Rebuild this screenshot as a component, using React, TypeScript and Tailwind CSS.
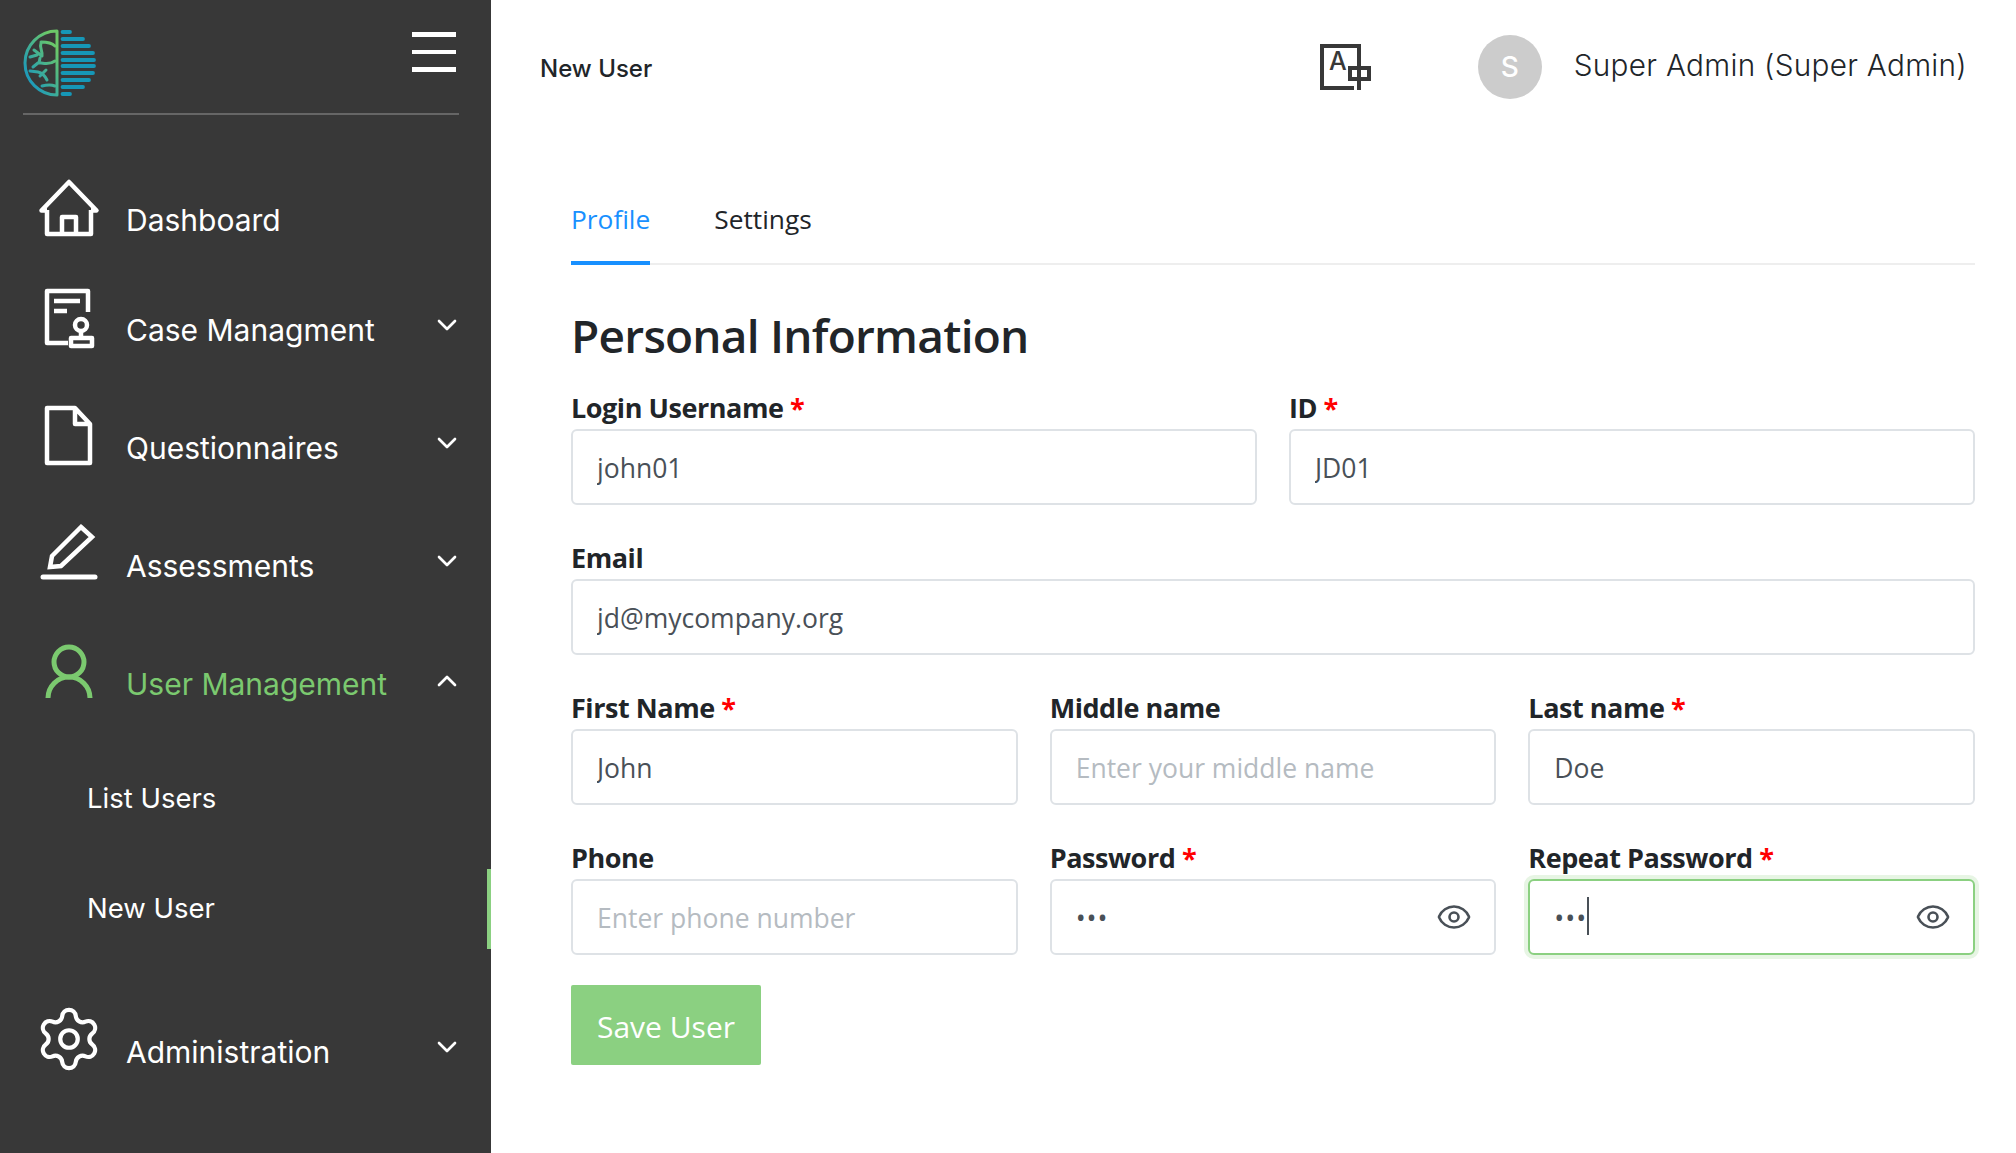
import React from 'react';
import { ChevronDown, ChevronUp, Eye, Settings } from 'lucide-react';

const sideFont = "font-['Inter',sans-serif]";

function Logo() {
  const bars: [number, number][] = [
    [32, 70], [39, 83], [46, 89], [53, 93], [60, 94], [66, 94], [73, 93], [80, 89], [87, 83], [94, 70],
  ];
  return (
    <svg width="74" height="68" viewBox="23 29 74 68" fill="none">
      <defs>
        <linearGradient id="brain" x1="24" y1="70" x2="58" y2="50" gradientUnits="userSpaceOnUse">
          <stop offset="0" stopColor="#1f9bb8" />
          <stop offset="1" stopColor="#6cc868" />
        </linearGradient>
      </defs>
      <g stroke="url(#brain)" strokeWidth="3" strokeLinecap="round">
        <path d="M57 31V95M57 31A32 32 0 0 0 57 95" />
        <path d="M41 42C47 42 52 43 55 46M41 43C39 48 43 51 42 56M34 50L42 56M30 57L37 55M55 61C48 66 42 62 38 63L33 67M40 58L39 63" />
        <path d="M30 71L38 72C43 73 46 78 47 80M46 70L40 76M42 86C46 85 50 84 55 86" />
      </g>
      {bars.map(([y, x]) => (
        <line key={y} x1="62.5" y1={y} x2={x} y2={y} stroke="#1697b7" strokeWidth="3.8" strokeLinecap="round" />
      ))}
    </svg>
  );
}

function HomeIcon() {
  return (
    <svg width="64" height="64" viewBox="0 0 64 64" fill="none" stroke="currentColor" strokeWidth="4.5" strokeLinejoin="round">
      <path d="M10 35.5H4.5L32 7l27.5 28.5H54" />
      <path d="M10 35V59H54V35M25 59V42H39V59" />
    </svg>
  );
}

function CaseIcon() {
  return (
    <svg width="64" height="64" viewBox="0 0 64 64" fill="none" stroke="currentColor" strokeWidth="4.5" strokeLinejoin="round">
      <path d="M51 27V6H10V58H31M17 16H43M17 26H30" />
      <circle cx="44" cy="40" r="6" />
      <path d="M44 46V53M34 53H55V61H34Z" />
    </svg>
  );
}

function DocIcon() {
  return (
    <svg width="64" height="64" viewBox="0 0 64 64" fill="none" stroke="currentColor" strokeWidth="4.5" strokeLinejoin="round">
      <path d="M10 5H38L53 21V60H10ZM38 5V21H53" />
    </svg>
  );
}

function PenIcon() {
  return (
    <svg width="64" height="64" viewBox="0 0 64 64" fill="none" stroke="currentColor" strokeWidth="4.5" strokeLinejoin="miter">
      <path d="M44 6L55 16L24 45L13 46L15 35Z" />
      <path d="M6 56H58" strokeLinecap="round" strokeWidth="5" />
    </svg>
  );
}

function UserIcon() {
  return (
    <svg width="64" height="64" viewBox="0 0 64 64" fill="none" stroke="currentColor" strokeWidth="5">
      <circle cx="32" cy="23" r="15" />
      <path d="M11 59A21 21 0 0 1 53 59" />
    </svg>
  );
}

function NavRow({ icon, label, open, active, tall }: { icon: React.ReactNode; label: string; open?: boolean; active?: boolean; tall?: boolean }) {
  return (
    <div className={`flex items-center pl-[37px] pr-[28px] ${tall ? 'h-[118px]' : 'h-[110px]'} ${active ? 'text-[#7bc96f]' : 'text-white'}`}>
      <div className="w-[64px] h-[64px] mb-[26px] shrink-0 flex items-center justify-center">{icon}</div>
      <span className="ml-[25px] flex-1 text-[30px] leading-none">{label}</span>
      {open === true && <ChevronUp size={32} className="text-white mb-[6px]" />}
      {open === false && <ChevronDown size={32} className="text-white mb-[10px]" />}
    </div>
  );
}

function Sidebar() {
  return (
    <aside className={`w-[491px] shrink-0 h-[1153px] bg-[#383838] ${sideFont}`}>
      <div className="ml-[23px] mr-[32px] h-[115px] border-b-2 border-[#666666] flex items-start justify-between pt-[29px] pr-[3px]">
        <Logo />
        <div className="mt-[3px] flex flex-col gap-[13px]">
          <span className="block w-[44px] h-[5px] bg-white" />
          <span className="block w-[44px] h-[4px] bg-white" />
          <span className="block w-[44px] h-[5px] bg-white" />
        </div>
      </div>
      <nav className="pt-[50px]">
        <NavRow icon={<HomeIcon />} label="Dashboard" />
        <NavRow icon={<CaseIcon />} label="Case Managment" open={false} />
        <div className="mt-[4px]">
          <NavRow tall icon={<DocIcon />} label="Questionnaires" open={false} />
          <NavRow tall icon={<PenIcon />} label="Assessments" open={false} />
          <NavRow tall active icon={<UserIcon />} label="User Management" open />
        </div>
        <div className="h-[110px] flex items-center pl-[87px] pt-[2px] text-white text-[27.5px] leading-none">List Users</div>
        <div className="relative h-[110px] flex items-center pl-[87px] pt-[2px] text-white text-[27.5px] leading-none">
          New User
          <span className="absolute right-0 top-[16px] w-[4px] h-[80px] bg-[#8bd081]" />
        </div>
        <div className="mt-[34px]">
          <NavRow icon={<Settings size={70} strokeWidth={1.45} className="shrink-0" />} label="Administration" open={false} />
        </div>
      </nav>
    </aside>
  );
}

function TranslateIcon() {
  return (
    <svg width="51" height="46" viewBox="0 0 51 46" fill="none" stroke="#383838" strokeWidth="4">
      <path d="M39 17V2H2V44H34" />
      <text x="9" y="26" fontSize="25" fontWeight="500" fill="#383838" stroke="none" fontFamily="Inter, sans-serif">A</text>
      <path d="M30 24H49V35H30ZM39 17V46" />
    </svg>
  );
}

function Label({ text, required }: { text: string; required?: boolean }) {
  return (
    <label className="block h-[36px] mb-[3px] text-[27px] leading-[36px] font-bold tracking-[-0.45px] text-[#212529]">
      {text}
      {required && <span className="text-[#ff0000]"> *</span>}
    </label>
  );
}

function Field({ label, required, value, placeholder, password, focused }: { label: string; required?: boolean; value?: string; placeholder?: string; password?: boolean; focused?: boolean }) {
  return (
    <div>
      <Label text={label} required={required} />
      <div className="relative">
        <input
          readOnly
          type={password ? 'password' : 'text'}
          defaultValue={value}
          placeholder={placeholder}
          className={`block w-full h-[76px] px-[24px] pt-[1px] rounded-[6px] border-2 bg-white text-[26.5px] text-[#495057] placeholder:text-[#b5bbc1] outline-none ${password ? 'tracking-[1px]' : ''} ${focused ? 'border-[#8bd081] shadow-[0_0_0_4px_#e7f5e4]' : 'border-[#dee2e6]'}`}
        />
        {password && <Eye size={36} strokeWidth={1.75} className="absolute right-[24px] top-[20px] text-[#495057]" />}
        {focused && <span className="absolute left-[59px] top-[18px] w-[2px] h-[38px] bg-[#495057]" />}
      </div>
    </div>
  );
}

export default function App() {
  return (
    <div className="flex w-[2016px] h-[1153px] overflow-hidden bg-white font-['Open_Sans',sans-serif]">
      <Sidebar />
      <main className="flex-1 min-w-0">
        <header className={`h-[134px] pl-[49px] pr-[49px] flex items-center text-[#212529] ${sideFont}`}>
          <span className="flex-1 text-[24px] font-medium mt-[3px]">New User</span>
          <TranslateIcon />
          <div className="ml-[107px] w-[64px] h-[64px] rounded-full bg-[#cccccc] text-white text-[28px] font-medium flex items-center justify-center">S</div>
          <span className="ml-[32px] text-[29.7px] font-light tracking-[0.3px] whitespace-nowrap -mt-[3px]">Super Admin (Super Admin)</span>
        </header>
        <div className="pl-[80px] pr-[41px]">
          <div className="h-[131px] flex items-end gap-[64px] border-b-2 border-[#eeeeee]">
            <div className="h-[68px] -mb-[2px] pt-[4px] border-b-4 border-[#1890ff] text-[#1890ff] text-[26.3px] leading-[36px]">Profile</div>
            <div className="h-[68px] -mb-[2px] pt-[4px] text-[#212529] text-[26.3px] leading-[36px]">Settings</div>
          </div>
          <h1 className="mt-[40px] mb-[25px] h-[60px] text-[46px] leading-[60px] font-semibold tracking-[-0.75px] text-[#212529]">Personal Information</h1>
          <form className="flex flex-col gap-[35px]">
            <div className="grid grid-cols-2 gap-x-[32px]">
              <Field label="Login Username" required value="john01" />
              <Field label="ID" required value="JD01" />
            </div>
            <Field label="Email" value="jd@mycompany.org" />
            <div className="grid grid-cols-3 gap-x-[32px]">
              <Field label="First Name" required value="John" />
              <Field label="Middle name" placeholder="Enter your middle name" />
              <Field label="Last name" required value="Doe" />
            </div>
            <div className="grid grid-cols-3 gap-x-[32px]">
              <Field label="Phone" placeholder="Enter phone number" />
              <Field label="Password" required password value="abc" />
              <Field label="Repeat Password" required password focused value="abc" />
            </div>
          </form>
          <button className="mt-[30px] w-[190px] h-[80px] pt-[2px] rounded-[2px] bg-[#8bd081] text-white text-[30px]">Save User</button>
        </div>
      </main>
    </div>
  );
}
